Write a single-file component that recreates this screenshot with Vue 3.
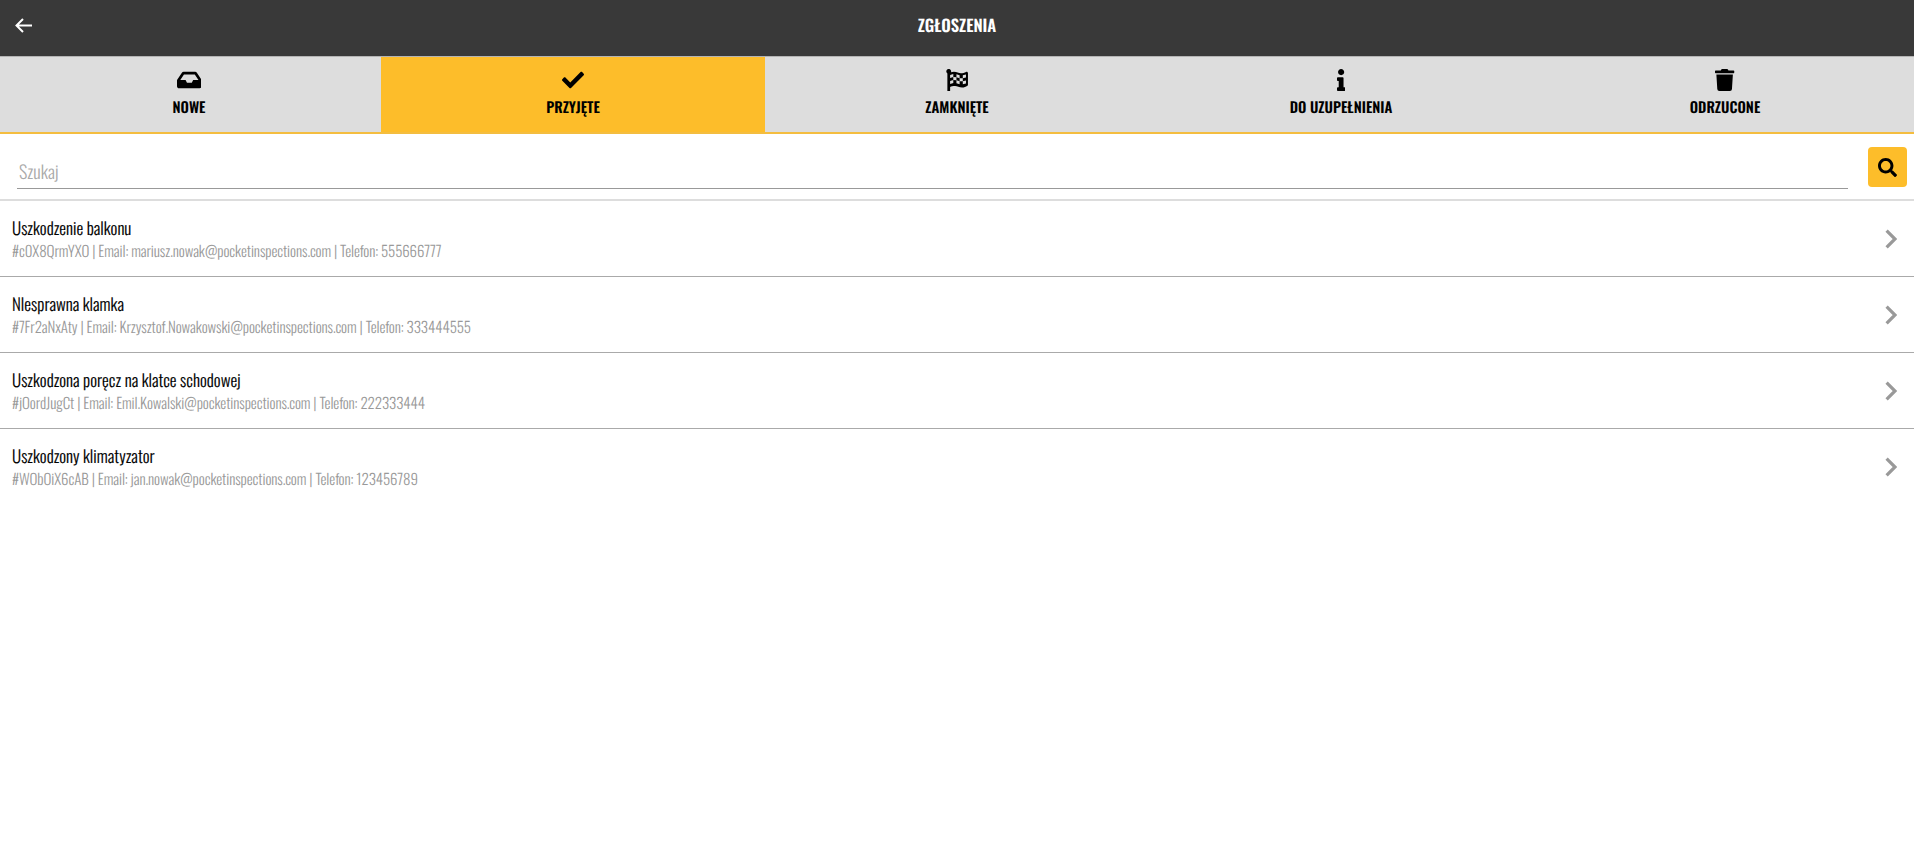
<script setup>
const items = [
  { title: 'Uszkodzenie balkonu', sub: '#c0X8QrmYXO | Email: mariusz.nowak@pocketinspections.com | Telefon: 555666777' },
  { title: 'Nlesprawna klamka', sub: '#7Fr2aNxAty | Email: Krzysztof.Nowakowski@pocketinspections.com | Telefon: 333444555' },
  { title: 'Uszkodzona poręcz na klatce schodowej', sub: '#jOordJugCt | Email: Emil.Kowalski@pocketinspections.com | Telefon: 222333444' },
  { title: 'Uszkodzony klimatyzator', sub: '#WObOiX6cAB | Email: jan.nowak@pocketinspections.com | Telefon: 123456789' },
]
const X = [96, 170, 243, 317, 391, 465]
const T = [138, 116, 120, 146, 146, 126]
let holes = ''
for (let r = 0; r < 3; r++) {
  for (let c = 0; c < 5; c++) {
    if ((c + r) % 2 === 0) {
      holes += `M${X[c]} ${T[c] + 70 * r}L${X[c + 1]} ${T[c + 1] + 70 * r}V${T[c + 1] + 70 * (r + 1)}L${X[c]} ${T[c] + 70 * (r + 1)}Z`
    }
  }
}
</script>

<template>
  <div class="page">
    <header class="top">
      <svg class="back" viewBox="0 0 17 15" width="17" height="15" fill="none" stroke="#fff" stroke-width="2">
        <path d="M17 7.5H1.8M8 1 1.5 7.5 8 14" />
      </svg>
      <span class="top-title">ZGŁOSZENIA</span>
    </header>
    <nav class="tabs">
      <div class="tab">
        <svg class="ic" width="24.75" height="22" viewBox="0 0 576 512"><path d="M567.938 243.908L462.25 85.374A48.003 48.003 0 0 0 422.311 64H153.689a48 48 0 0 0-39.938 21.374L8.062 243.908A47.994 47.994 0 0 0 0 270.533V400c0 26.51 21.49 48 48 48h480c26.51 0 48-21.49 48-48V270.533a47.994 47.994 0 0 0-8.062-26.625zM162.252 128h251.497l85.333 128H376l-32 64H232l-32-64H76.918l85.334-128z"/></svg>
        <span>NOWE</span>
      </div>
      <div class="tab active">
        <svg class="ic" width="22" height="22" viewBox="0 0 512 512"><path d="M173.898 439.404l-166.4-166.4c-9.997-9.997-9.997-26.206 0-36.204l36.203-36.204c9.997-9.998 26.207-9.998 36.204 0L192 312.69 432.095 72.596c9.997-9.997 26.207-9.997 36.204 0l36.203 36.204c9.997 9.997 9.997 26.206 0 36.204l-294.4 294.401c-9.998 9.997-26.207 9.997-36.204-.001z"/></svg>
        <span>PRZYJĘTE</span>
      </div>
      <div class="tab">
        <svg class="ic" width="22" height="22" viewBox="0 0 512 512">
          <path d="M56 0a56 56 0 0 1 60 76c21-8 43-12 68-12 67 0 112 35 165 35 40 0 83-16 117-32 21-10 46 6 45 29v269c0 11-5 21-14 27-36 25-74 41-122 41-68 0-112-35-165-35-51 0-86 10-114 22v94c0 13-11 24-24 24H56c-13 0-24-11-24-24V102A56 56 0 0 1 56 0z"/>
          <path fill="#ddd" :d="holes"/>
        </svg>
        <span>ZAMKNIĘTE</span>
      </div>
      <div class="tab">
        <svg class="ic" width="8.25" height="22" viewBox="0 0 192 512"><path d="M20 424.229h20V279.771H20c-11.046 0-20-8.954-20-20V212c0-11.046 8.954-20 20-20h112c11.046 0 20 8.954 20 20v212.229h20c11.046 0 20 8.954 20 20V492c0 11.046-8.954 20-20 20H20c-11.046 0-20-8.954-20-20v-47.771c0-11.046 8.954-20 20-20zM96 0C56.235 0 24 32.235 24 72s32.235 72 72 72 72-32.235 72-72S135.764 0 96 0z"/></svg>
        <span>DO UZUPEŁNIENIA</span>
      </div>
      <div class="tab">
        <svg class="ic" width="19.25" height="22" viewBox="0 0 448 512"><path d="M432 32H312l-9.4-18.7A24 24 0 0 0 281.1 0H166.8a23.72 23.72 0 0 0-21.4 13.3L136 32H16A16 16 0 0 0 0 48v32a16 16 0 0 0 16 16h416a16 16 0 0 0 16-16V48a16 16 0 0 0-16-16zM53.2 467a48 48 0 0 0 47.9 45h245.8a48 48 0 0 0 47.9-45L416 128H32z"/></svg>
        <span>ODRZUCONE</span>
      </div>
    </nav>
    <div class="search">
      <div class="field">Szukaj</div>
      <button class="sbtn">
        <svg width="19" height="19" viewBox="0 0 512 512"><path d="M505 442.7L405.3 343c-4.5-4.5-10.6-7-17-7H372c27.6-35.3 44-79.7 44-128C416 93.1 322.9 0 208 0S0 93.1 0 208s93.1 208 208 208c48.3 0 92.7-16.4 128-44v16.3c0 6.4 2.5 12.5 7 17l99.7 99.7c9.4 9.4 24.6 9.4 33.9 0l28.3-28.3c9.4-9.4 9.4-24.6.1-34zM208 336c-70.7 0-128-57.2-128-128 0-70.7 57.2-128 128-128 70.7 0 128 57.2 128 128 0 70.7-57.2 128-128 128z"/></svg>
      </button>
    </div>
    <ul class="list">
      <li v-for="it in items" :key="it.title" class="row">
        <div class="txt">
          <div class="title">{{ it.title }}</div>
          <div class="sub">{{ it.sub }}</div>
        </div>
        <svg class="chev" width="12" height="20" viewBox="0 0 12 20" fill="none" stroke="#999" stroke-width="3.2"><path d="M1.6 1.6 10 10l-8.4 8.4"/></svg>
      </li>
    </ul>
  </div>
</template>

<style>
html, body { background: #fff; }
</style>
<style scoped>
.page { font-family: "Oswald", "Roboto", sans-serif; text-rendering: geometricPrecision; width: 1914px; height: 846px; overflow: hidden; background: #fff; }
.top { height: 56px; background: #393939; display: flex; align-items: center; justify-content: center; position: relative; }
.back { position: absolute; left: 15px; top: 18px; }
.top-title { color: #fff; font-size: 16.5px; font-weight: 600; line-height: 50px; margin-top: -6px; }
.tabs { display: grid; grid-template-columns: repeat(5, 384px); margin: 0 -3px; height: 78px; box-sizing: border-box; background: #ddd; border-top: 1px solid #b4b4b4; border-bottom: 2px solid #f4bd3f; }
.tab { display: flex; flex-direction: column; align-items: center; color: #000; font-size: 14.5px; font-weight: 600; padding-top: 12px; line-height: 20px; }
.tab span { margin-top: 7px; }
.tab.active { background: #fdbd2a; }
.ic { display: block; }
.search { height: 67px; border-bottom: 2px solid #ddd; display: flex; align-items: flex-start; padding: 13px 7px 0 17px; box-sizing: border-box; }
.field { flex: 1; height: 42px; border-bottom: 1px solid #999; box-sizing: border-box; color: #aaa; font-size: 18px; font-weight: 300; padding: 12px 2px 0; line-height: 26px; }
.sbtn { width: 39px; height: 40px; margin-left: 20px; border: 0; border-radius: 4px; background: #fdbd2a; display: flex; align-items: center; justify-content: center; padding: 0; }
.list { list-style: none; margin: 0; padding: 0; }
.row { height: 76px; box-sizing: border-box; border-bottom: 1px solid #aaa; display: flex; align-items: center; justify-content: space-between; padding: 0 17px 0 12px; }
.row:last-child { border-bottom: 0; }
.title { font-size: 17px; font-weight: 300; letter-spacing: 0.03px; color: #000; line-height: 24px; -webkit-text-stroke: 0.15px #000; }
.sub { font-size: 15px; font-weight: 300; letter-spacing: -0.09px; color: #999; line-height: 22px; }
</style>
